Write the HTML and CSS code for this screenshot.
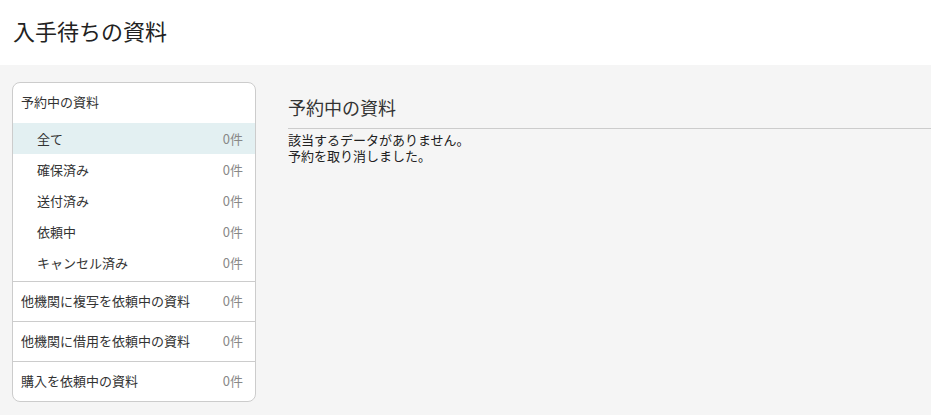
FILE: index.html
```html
<!DOCTYPE html>
<html lang="ja">
<head>
    <meta charset="utf-8">
    <title>入手待ちの資料</title>
    <link rel="stylesheet" href="styles.css">
</head>
<body>
    <header class="page-header">
        <h1>入手待ちの資料</h1>
    </header>
    <div class="page-body">
        <nav class="side-menu">
            <div class="menu-group">
                <div class="menu-title">予約中の資料</div>
                <a class="menu-item sub active"><span>全て</span><span class="count">0件</span></a>
                <a class="menu-item sub"><span>確保済み</span><span class="count">0件</span></a>
                <a class="menu-item sub"><span>送付済み</span><span class="count">0件</span></a>
                <a class="menu-item sub"><span>依頼中</span><span class="count">0件</span></a>
                <a class="menu-item sub last"><span>キャンセル済み</span><span class="count">0件</span></a>
            </div>
            <a class="menu-item group"><span>他機関に複写を依頼中の資料</span><span class="count">0件</span></a>
            <a class="menu-item group"><span>他機関に借用を依頼中の資料</span><span class="count">0件</span></a>
            <a class="menu-item group"><span>購入を依頼中の資料</span><span class="count">0件</span></a>
        </nav>
        <main class="content">
            <h2>予約中の資料</h2>
            <div class="message">
                <div>該当するデータがありません。</div>
                <div>予約を取り消しました。</div>
            </div>
        </main>
    </div>
</body>
</html>
```

FILE: styles.css
```css
body {
    margin: 0;
    font-family: "Noto Sans CJK JP", "Noto Sans", sans-serif;
    font-size: 13px;
    color: #333;
    background: #f5f5f5;
}
.page-header {
    background: white;
    height: 65px;
    padding: 0 13px;
}
.page-header h1 {
    margin: 0;
    padding-top: 15px;
    font-size: 22px;
    font-weight: normal;
    line-height: 30px;
    color: #222;
}
.page-body {
    display: flex;
    align-items: flex-start;
    padding: 17px 0 0 12px;
}
.side-menu {
    width: 242px;
    flex-shrink: 0;
    background: white;
    border: 1px solid #ccc;
    border-radius: 8px;
    overflow: hidden;
}
.menu-group {
    border-bottom: 1px solid #ccc;
}
.menu-title {
    padding: 0 8px;
    height: 40px;
    line-height: 38px;
    color: #333;
}
.menu-item {
    display: flex;
    justify-content: space-between;
    align-items: center;
    padding: 0 12px 0 8px;
    color: #333;
    cursor: pointer;
}
.menu-item.sub {
    height: 31px;
    padding-left: 24px;
}
.menu-item.sub.last {
    height: 34px;
    padding-bottom: 3px;
    box-sizing: border-box;
}
.menu-item.active {
    background: #e3f0f2;
}
.menu-item.group {
    height: 37px;
    padding-bottom: 2px;
    border-bottom: 1px solid #ccc;
}
.menu-item.group:last-child {
    border-bottom: none;
}
.count {
    color: #888;
}
.content {
    flex: 1;
    margin-left: 32px;
    padding-top: 12px;
}
.content h2 {
    margin: 0;
    padding: 0 0 8px 0;
    font-size: 18px;
    font-weight: normal;
    line-height: 26px;
    color: #333;
    border-bottom: 1px solid #ccc;
}
.message {
    margin-top: 3px;
    font-size: 13px;
    line-height: 16px;
    color: #222;
}
```
